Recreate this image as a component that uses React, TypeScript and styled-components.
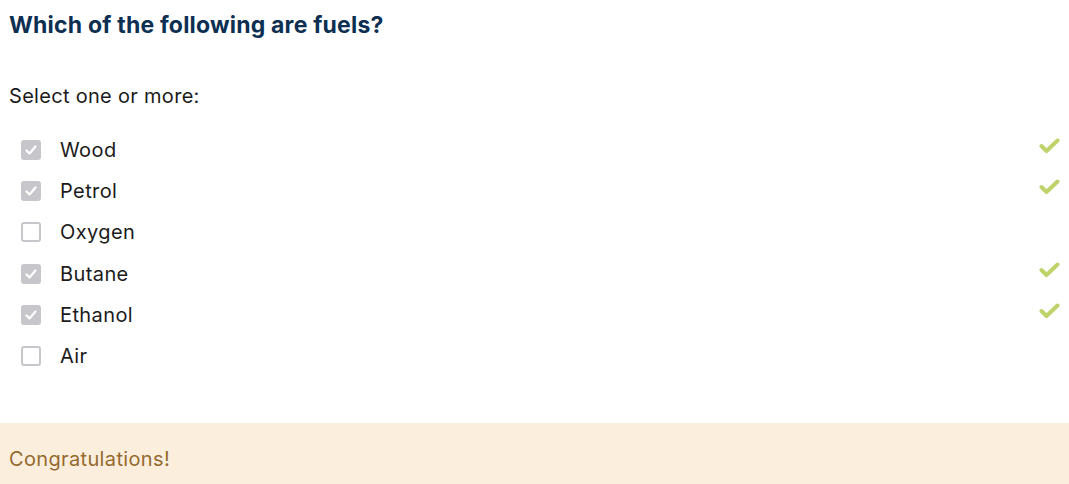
import React from "react";
import styled, { createGlobalStyle } from "styled-components";

const Global = createGlobalStyle`
  html, body { margin: 0; padding: 0; background: #fff; }
  body { font-family: Inter, "Noto Sans", sans-serif; }
`;

const Page = styled.div`
  display: flex;
  flex-direction: column;
`;

const Question = styled.div`
  padding: 0 9px;
`;

const Title = styled.h2`
  margin: 0;
  padding-top: 11px;
  font-size: 23px;
  line-height: 28px;
  font-weight: 700;
  color: #0c2f52;
  letter-spacing: 0.2px;
`;

const Prompt = styled.div`
  margin-top: 45px;
  font-size: 20px;
  line-height: 24px;
  letter-spacing: 0.3px;
  color: #1b1b1b;
`;

const List = styled.div`
  margin-top: 21px;
  display: flex;
  flex-direction: column;
`;

const Row = styled.div`
  display: flex;
  align-items: center;
  height: 41.3px;
  padding-left: 21px;
`;

const Box = styled.span<{ $checked: boolean }>`
  box-sizing: border-box;
  width: 20px;
  height: 20px;
  border-radius: 3px;
  border: 2px solid #c7c7cb;
  background: ${(p) => (p.$checked ? "#c7c7cb" : "#fff")};
  display: flex;
  align-items: center;
  justify-content: center;
  flex-shrink: 0;
`;

const Label = styled.span`
  margin-left: 19px;
  font-size: 20px;
  letter-spacing: 0.4px;
  color: #1b1b1b;
  flex: 1;
`;

const Mark = styled.span`
  width: 22px;
  display: flex;
  justify-content: center;
  margin-right: 9px;
  margin-top: -8px;
`;

const Feedback = styled.div`
  margin-top: 46px;
  background: #fbeedc;
  color: #946a2f;
  font-size: 20px;
  letter-spacing: 0.35px;
  padding: 24px 9px 20px;
  line-height: 24px;
`;

const BoxCheck = () => (
  <svg width="14" height="14" viewBox="0 0 14 14">
    <path d="M2.5 7.5 L5.5 10.5 L11.5 3.5" fill="none" stroke="#fff" strokeWidth="2.2" strokeLinecap="round" strokeLinejoin="round" />
  </svg>
);

const GreenCheck = () => (
  <svg width="21" height="16" viewBox="0 0 21 16">
    <path d="M2.5 8 L7.5 13 L18.5 2.5" fill="none" stroke="#bed36a" strokeWidth="4" strokeLinecap="round" strokeLinejoin="round" />
  </svg>
);

const options = [
  { label: "Wood", checked: true },
  { label: "Petrol", checked: true },
  { label: "Oxygen", checked: false },
  { label: "Butane", checked: true },
  { label: "Ethanol", checked: true },
  { label: "Air", checked: false },
];

export default function App() {
  return (
    <Page>
      <Global />
      <Question>
        <Title>Which of the following are fuels?</Title>
        <Prompt>Select one or more:</Prompt>
      </Question>
      <List>
        {options.map((o) => (
          <Row key={o.label}>
            <Box $checked={o.checked}>{o.checked && <BoxCheck />}</Box>
            <Label>{o.label}</Label>
            <Mark>{o.checked && <GreenCheck />}</Mark>
          </Row>
        ))}
      </List>
      <Feedback>Congratulations!</Feedback>
    </Page>
  );
}
